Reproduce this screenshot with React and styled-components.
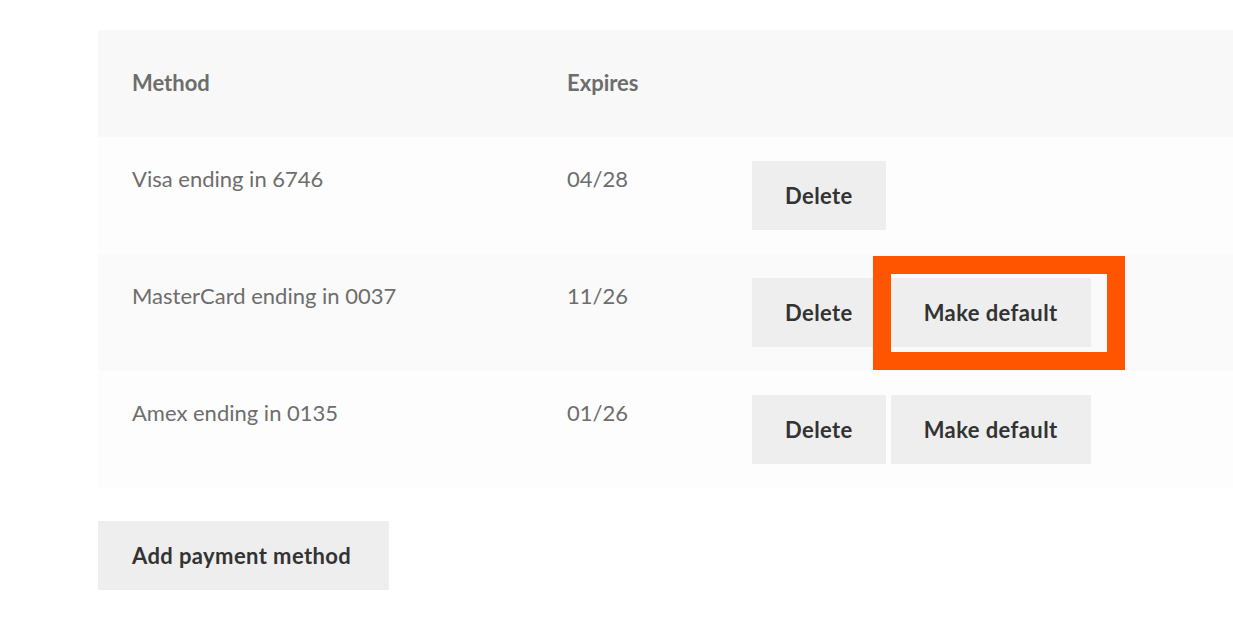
import React from "react";
import styled, { createGlobalStyle } from "styled-components";

const GlobalStyle = createGlobalStyle`
  html, body {
    margin: 0;
    padding: 0;
    background: #ffffff;
    overflow: hidden;
  }
  body {
    font-family: Lato, "Noto Sans", "Liberation Sans", sans-serif;
    color: #6d6d6d;
  }
  *, *::before, *::after {
    box-sizing: border-box;
  }
`;

const Page = styled.div`
  padding: 30px 0 0 98px;
`;

const Table = styled.table`
  width: 1160px;
  border-collapse: collapse;
  border-spacing: 0;
  table-layout: fixed;
  margin-bottom: 33px;
`;

const HeadCell = styled.th`
  background: #f8f8f8;
  text-align: left;
  font-weight: 700;
  font-size: 22px;
  line-height: 36px;
  color: #6d6d6d;
  padding: 35px 34px 36px;
  width: ${(p) => p.$w};
`;

const Row = styled.tr`
  background: ${(p) => (p.$alt ? "#fafafa" : "#fdfdfd")};
`;

const Cell = styled.td`
  vertical-align: top;
  font-size: 22px;
  line-height: 36px;
  padding: 24px 34px;
  color: #6d6d6d;
`;

const Actions = styled.td`
  vertical-align: top;
  padding: 24px 0 24px 34px;
  white-space: nowrap;
  font-size: 0;
`;

const ButtonWrap = styled.span`
  position: relative;
  display: inline-block;
  vertical-align: top;
  margin-right: 5px;
`;

const Button = styled.button`
  display: block;
  border: 0;
  margin: 0;
  background: #eeeeee;
  color: #333333;
  font-family: Lato, "Noto Sans", "Liberation Sans", sans-serif;
  font-weight: 700;
  font-size: 22px;
  letter-spacing: 0.4px;
  line-height: 37px;
  padding: ${(p) => (p.$wide ? "16px 38px 16px 34px" : "16px 33px")};
  cursor: pointer;
`;

const Highlight = styled.span`
  position: absolute;
  left: -18px;
  top: -22px;
  right: -34px;
  bottom: -23px;
  border: 18px solid #ff5500;
  pointer-events: none;
`;

const cards = [
  { method: "Visa ending in 6746", expires: "04/28", isDefault: true },
  { method: "MasterCard ending in 0037", expires: "11/26", highlight: true },
  { method: "Amex ending in 0135", expires: "01/26" },
];

export default function App() {
  return (
    <>
      <GlobalStyle />
      <Page>
        <Table>
          <thead>
            <tr>
              <HeadCell $w="435px">Method</HeadCell>
              <HeadCell $w="185px">Expires</HeadCell>
              <HeadCell $w="540px">&nbsp;</HeadCell>
            </tr>
          </thead>
          <tbody>
            {cards.map((c, i) => (
              <Row key={c.method} $alt={i % 2 === 1}>
                <Cell>{c.method}</Cell>
                <Cell>{c.expires}</Cell>
                <Actions>
                  <ButtonWrap>
                    <Button>Delete</Button>
                  </ButtonWrap>
                  {!c.isDefault && (
                    <ButtonWrap>
                      <Button>Make default</Button>
                      {c.highlight && <Highlight />}
                    </ButtonWrap>
                  )}
                </Actions>
              </Row>
            ))}
          </tbody>
        </Table>
        <Button $wide>Add payment method</Button>
      </Page>
    </>
  );
}
